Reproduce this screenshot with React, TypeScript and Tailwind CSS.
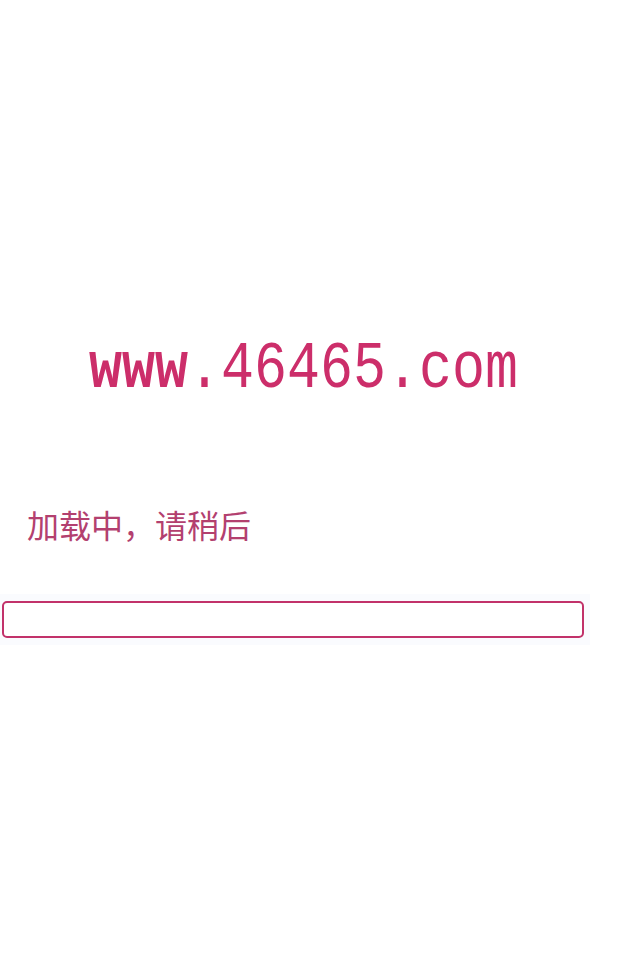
export default function App() {
  return (
    <div className="min-h-[960px] w-[640px] bg-white">
      <div className="pt-[331px] pl-[89px]">
        <div
          className="text-[55px] leading-[66px] text-[#cc2e6a] origin-top scale-y-[1.2]"
          style={{ fontFamily: '"Liberation Mono", monospace' }}
        >
          <span className="font-bold">www</span>.46465.com
        </div>
      </div>
      <div
        className="mt-[107px] pl-[27px] text-[32px] leading-[40px] text-[#b3406f]"
        style={{ fontFamily: '"Noto Sans CJK SC", sans-serif' }}
      >
        加载中，请稍后
      </div>
      <div className="mt-[50px] w-[590px] bg-[#fafbfe] py-[7px]">
        <div className="ml-[2px] h-[37px] w-[582px] rounded-[5px] border-2 border-[#c2326a] bg-white" />
      </div>
    </div>
  );
}
